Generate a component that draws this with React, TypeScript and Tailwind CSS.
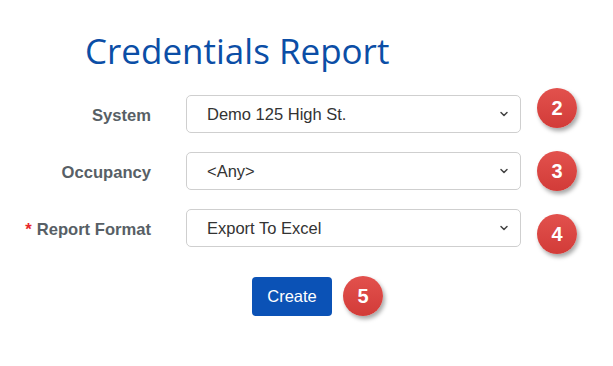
import { ChevronDown } from 'lucide-react';

const rows = [
  { label: 'System', value: 'Demo 125 High St.', step: 2, shift: '-translate-y-[6px]', required: false },
  { label: 'Occupancy', value: '<Any>', step: 3, shift: 'translate-y-0', required: false },
  { label: 'Report Format', value: 'Export To Excel', step: 4, shift: 'translate-y-[6px]', required: true },
];

function StepBadge({ n, className = '' }: { n: number; className?: string }) {
  return (
    <div
      className={`flex h-[40px] w-[40px] items-center justify-center rounded-full bg-gradient-to-b from-[#e2514d] to-[#d23b38] text-[20px] font-bold text-white shadow-[2px_3px_4px_rgba(0,0,0,0.35)] ${className}`}
    >
      {n}
    </div>
  );
}

export default function App() {
  return (
    <div className="min-h-screen w-full bg-white font-['Liberation_Sans',Arial,sans-serif]">
      <h1 className="pt-[31px] pl-[85px] font-['Open_Sans',sans-serif] text-[35px] leading-[40px] text-[#0b4ea6]">
        Credentials Report
      </h1>

      <div className="mt-[23px] flex flex-col gap-[17px]">
        {rows.map((r) => (
          <div key={r.label} className="flex items-center">
            <div className="w-[151px] pt-[4px] text-right text-[16.6px] font-bold text-[#585f66]">
              {r.required && <span className="mr-[5px] text-[#e8262a]">*</span>}
              {r.label}
            </div>
            <div className="ml-[35px] flex h-[38px] w-[335px] items-center justify-between rounded-[5px] border border-[#cfcfcf] bg-white pl-[20px] pr-[10px] text-[16.5px] text-[#333]">
              <span>{r.value}</span>
              <ChevronDown className="h-[12px] w-[12px] text-[#444]" strokeWidth={3} />
            </div>
            <StepBadge n={r.step} className={`ml-[16px] ${r.shift}`} />
          </div>
        ))}
      </div>

      <div className="mt-[28px] flex items-center pl-[252px]">
        <button className="h-[39px] w-[80px] rounded-[4px] bg-[#0b52b6] text-[16.5px] text-white">
          Create
        </button>
        <StepBadge n={5} className="ml-[11px]" />
      </div>
    </div>
  );
}
